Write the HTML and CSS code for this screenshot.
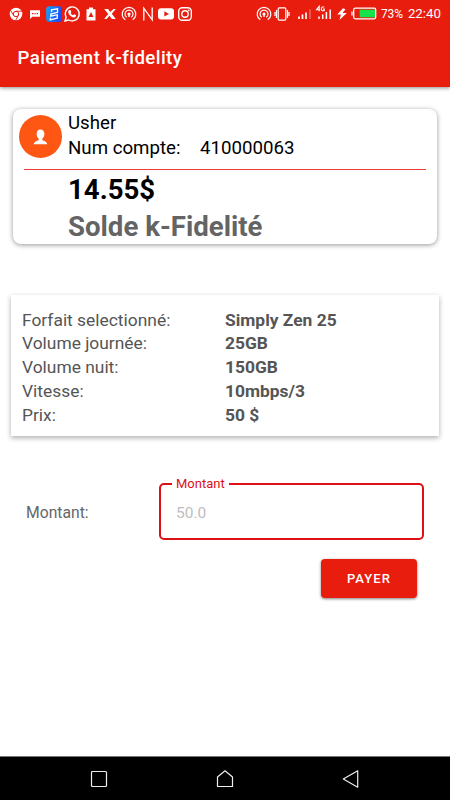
FILE: index.html
```html
<!DOCTYPE html>
<html lang="fr">
<head>
<meta charset="utf-8">
<title>Paiement k-fidelity</title>
<link rel="stylesheet" href="styles.css">
</head>
<body>
<div class="screen">
  <header class="top">
    <div class="status">
      <div class="notifs">
        <svg viewBox="0 0 18 18"><circle cx="9" cy="9" r="6.3" fill="#fff"/><circle cx="9" cy="9" r="2.7" fill="#fff" stroke="#e91d0e"/><path d="M9 6.2h6M6.5 10.3l-3-5M11.5 10.4l-3 5" stroke="#e91d0e" stroke-width=".9"/></svg>
        <svg viewBox="0 0 18 18"><path d="M4 5.300h10v6.500H6.300L4 14z" fill="#fff"/><path d="M6 8.600h1.500m1 0h1.200m1 0h1.300" stroke="#e91d0e" stroke-width="1.200"/></svg>
        <svg viewBox="0 0 18 18"><defs><linearGradient id="g" x1="0" y1="0" x2="1" y2=".3"><stop offset="0" stop-color="#10a8ff"/><stop offset="1" stop-color="#204bf5"/></linearGradient></defs><rect x="1.200" y="1.200" width="15.600" height="15.800" rx="3" fill="url(#g)"/><path d="M6.500 7V4.800l6-1v3.500L5.800 9v2.200l6.500-1.500v3.400l-7 1.800v-2.200" fill="none" stroke="#fff" stroke-width="1.300"/></svg>
        <svg viewBox="0 0 18 18"><path d="M2 16l1.100-3.700A7 7 0 1 1 5.800 15z" fill="none" stroke="#fff" stroke-width="1.400"/><path d="M6.300 5.100l1.200-.2.900 2-.8 1c.5 1.100 1.400 1.900 2.500 2.400l1-1 2 1c0 1.500-1.200 2.200-2.200 2.100C8 12 5.500 9.500 5.200 7.200c0-.9.4-1.700 1.100-2.100z" fill="#fff"/></svg>
        <svg viewBox="0 0 18 18"><path d="M7 2.500h4v1.700h2.500v11.300h-9V4.200H7z" fill="#fff"/><path d="M9 7l2.500 5h-5z" fill="#e91d0e"/></svg>
        <svg viewBox="0 0 18 18"><path d="M3.200 4h4l2 2.900L12.500 4h2.300l-4 4.700 4 5.300h-4l-2.300-3.200L5.500 14H3.200l4-5z" fill="#fff"/></svg>
        <svg viewBox="0 0 18 18"><g fill="none" stroke="#fff" stroke-width="1.200"><path d="M5.300 14.800a6.800 6.800 0 1 1 7.400 0"/><path d="M6.700 12.300a4 4 0 1 1 4.600 0"/></g><circle cx="9" cy="9" r="1.600" fill="#fff"/><path d="M8.300 10h1.400v2H8.300z" fill="#fff"/></svg>
        <svg viewBox="0 0 18 18"><path d="M4.800 15.500V3.200l8.400 11.600V2.500" fill="none" stroke="#fff" stroke-width="1.300"/></svg>
        <svg viewBox="0 0 18 18"><rect x="1" y="3.200" width="16" height="11.400" rx="3" fill="#fff"/><path d="M7.300 6.300v5.200L12 8.900z" fill="#e91d0e"/></svg>
        <svg viewBox="0 0 18 18"><g fill="none" stroke="#fff" stroke-width="1.400"><rect x="2.700" y="2.700" width="12.600" height="12.600" rx="3.500"/><circle cx="9" cy="9" r="3.200"/></g><circle cx="12.700" cy="5.300" r=".9" fill="#fff"/></svg>
      </div>
      <div class="system">
        <svg viewBox="0 0 18 18"><g fill="none" stroke="#fff" stroke-width="1.200"><path d="M5.300 14.800a6.800 6.800 0 1 1 7.400 0"/><path d="M6.700 12.300a4 4 0 1 1 4.600 0"/></g><circle cx="9" cy="9" r="1.600" fill="#fff"/><path d="M8.300 10h1.400v2H8.300z" fill="#fff"/></svg>
        <svg viewBox="0 0 18 18"><g fill="none" stroke="#fff" stroke-width="1.200"><rect x="5.200" y="2.900" width="7.600" height="12.200" rx="1"/><path d="M3.500 5v8M14.500 5v8M2 7v4M16 7v4"/></g></svg>
        <svg class="wide" viewBox="0 0 18 18"><path d="M3 14v-2.500M6.500 14v-4.500M10 14V7.500" stroke="#fff" stroke-width="1.700"/><path d="M14 14V4.500" stroke="#fff" stroke-opacity=".3" stroke-width="1.700"/></svg>
        <svg viewBox="0 0 18 18"><path d="M4 14v-2.500M7.700 14v-4.500M11.400 14V7M15.200 14V4.500" stroke="#fff" stroke-width="1.500"/><path d="M4.200 6.200V1.300L1.500 4.800h3.700M9.200 2H7.300L6.500 3v2l.8.800h1.900V4H8" fill="none" stroke="#fff" stroke-width="1.100"/></svg>
        <svg viewBox="0 0 18 18"><path d="M10 3.200L4.300 9.600h3.600L6.500 15l7.300-7H9.500l3-3.800z" fill="#fff"/></svg>
        <svg class="battery" viewBox="0 0 26 13"><rect x="2.700" y="1.200" width="22" height="10.600" rx="1.500" fill="none" stroke="#fff" stroke-width="1.300"/><path d="M1 4.500v4" stroke="#fff" stroke-width="1.300"/><path d="M8.700 2.700H24v7.600H8.700z" fill="#14e34a"/></svg>
        <span class="percent">73%</span>
        <span class="clock">22:40</span>
      </div>
    </div>
    <h1>Paiement k-fidelity</h1>
  </header>

  <main>
    <section class="account">
      <div class="owner">
        <svg class="avatar" viewBox="0 0 42 42"><circle cx="21" cy="21" r="21" fill="#fe5714"/><path d="M21 14.200c2.500 0 3.800 1.800 3.800 4.300 0 1.900-.9 3.600-2 4.500v1.600c1.500.8 4.400 1 4.700 4H14.500c.3-3 3.200-3.200 4.700-4V23c-1.100-.9-2-2.600-2-4.500 0-2.500 1.300-4.300 3.800-4.300z" fill="#fff"/></svg>
        <div class="identity">
          <div>Usher</div>
          <div class="number"><span>Num compte:</span><span>410000063</span></div>
        </div>
      </div>
      <div class="balance">
        <div class="amount">14.55$</div>
        <div class="caption">Solde k-Fidelité</div>
      </div>
    </section>

    <dl class="plan">
      <dt>Forfait selectionné:</dt><dd>Simply Zen 25</dd>
      <dt>Volume journée:</dt><dd>25GB</dd>
      <dt>Volume nuit:</dt><dd>150GB</dd>
      <dt>Vitesse:</dt><dd>10mbps/3</dd>
      <dt>Prix:</dt><dd>50 $</dd>
    </dl>

    <div class="payment">
      <label for="montant">Montant:</label>
      <fieldset class="field">
        <legend>Montant</legend>
        <input id="montant" type="text" placeholder="50.0">
      </fieldset>
    </div>
    <button class="pay" type="button">PAYER</button>
  </main>

  <nav class="navbar">
    <svg viewBox="0 0 18 18"><rect x="1.500" y="1.500" width="15" height="15" rx="1"/></svg>
    <svg viewBox="0 0 18 18"><path d="M1.500 7L9 .8 16.500 7v9.500h-15z"/></svg>
    <svg viewBox="0 0 18 18"><path d="M15.700.8v16.400L1.300 9z"/></svg>
  </nav>
</div>
</body>
</html>
```
FILE: styles.css
```css
* { box-sizing: border-box; }

body {
  margin: 0;
  background: #fff;
  font-family: Roboto, "Liberation Sans", sans-serif;
  color: #000;
}

.screen {
  display: flex;
  flex-direction: column;
  height: 800px;
}

.top {
  height: 87px;
  background: #e91d0e;
  color: #fff;
  box-shadow: 0 1px 4px rgba(0, 0, 0, .45);
}

.status {
  display: flex;
  justify-content: space-between;
  height: 27px;
  padding: 0 9px 0 7px;
}

.notifs, .system {
  display: flex;
  align-items: center;
}

.status svg { width: 18px; height: 18px; flex: none; }
.notifs { gap: .8px; }
.system .wide { margin: 0 1px 0 5px; }
.system .battery { width: 26px; height: 13px; }
.percent { margin-left: 4px; font-size: 12px; width: 27px; }
.clock { font-size: 13.300px; line-height: 27px; }

h1 {
  margin: 19px 0 0 17.500px;
  font-size: 18.700px;
  line-height: 24px;
  font-weight: 500;
  letter-spacing: .4px;
}

main {
  flex: 1;
  padding: 22px 11px 0;
}

.account {
  height: 135px;
  margin: 0 2px;
  padding: 0 11px;
  border-radius: 8px;
  box-shadow: 0 1px 5px rgba(0, 0, 0, .42);
}

.owner {
  display: flex;
  height: 61px;
  gap: 6px;
  border-bottom: 1px solid #f23c3c;
}

.avatar {
  width: 43px;
  height: 43px;
  margin: 6px 0 0 -5px;
}

.identity {
  padding-top: 2px;
  font-size: 18.700px;
  line-height: 25px;
}

.number { display: flex; gap: 19.500px; }

.balance { padding: 2px 0 0 44px; font-weight: 700; }
.amount { font-size: 27.600px; line-height: 36px; }
.caption { font-size: 27.600px; line-height: 37px; color: #646464; }

.plan {
  display: grid;
  grid-template-columns: 203px 1fr;
  align-content: start;
  height: 141px;
  margin: 51px 0 0;
  padding: 13.500px 11px 0;
  font-size: 17.400px;
  line-height: 23.800px;
  color: #555;
  box-shadow: 0 2px 5px rgba(0, 0, 0, .32);
}

.plan dd { margin: 0; font-weight: 700; }

.payment {
  display: flex;
  align-items: center;
  margin: 40px 15px 0 14px;
}

.payment label {
  width: 134px;
  padding: 8px 0 0 1px;
  font-size: 15.700px;
  color: #666;
}

.field {
  flex: 1;
  min-width: 0;
  height: 64px;
  margin: 0;
  padding: 0 15px;
  border: 2px solid #de1015;
  border-radius: 5px;
}

.field legend {
  margin-left: -4px;
  padding: 0 4px;
  font-size: 13px;
  line-height: 16px;
  color: #de1015;
}

.field input {
  display: block;
  width: 100%;
  height: 41px;
  padding: 0;
  border: 0;
  outline: 0;
  background: transparent;
  font: 15.500px Roboto, sans-serif;
}

.field input::placeholder { color: #bdbdbd; }

.pay {
  display: block;
  width: 96px;
  height: 39px;
  margin: 19px 22px 0 auto;
  padding: 0;
  border: 0;
  border-radius: 4px;
  background: #e91d0e;
  color: #fff;
  font: 500 13px Roboto, sans-serif;
  letter-spacing: 1.100px;
  box-shadow: 0 1px 3px rgba(0, 0, 0, .5);
}

.navbar {
  display: flex;
  justify-content: space-between;
  align-items: center;
  height: 44px;
  padding: 0 90px;
  border-top: 1px solid #777;
  background: #000;
}

.navbar svg {
  width: 18px;
  height: 18px;
  fill: none;
  stroke: #eee;
  stroke-width: 1.200;
  stroke-linejoin: round;
}
```
